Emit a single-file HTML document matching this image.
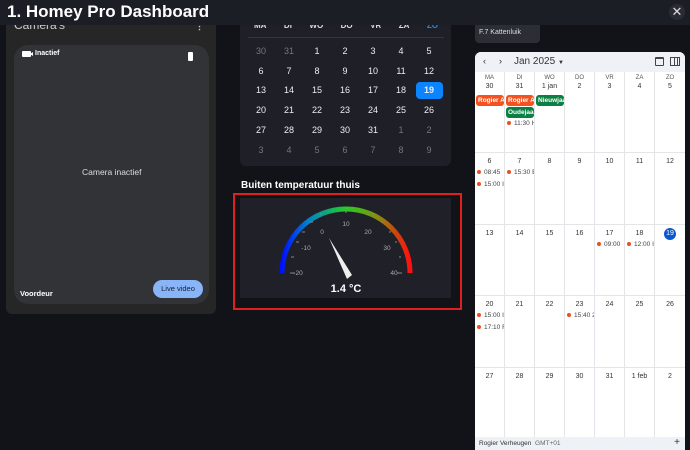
<!DOCTYPE html><html><head><meta charset="utf-8"><style>
*{margin:0;padding:0;box-sizing:border-box}
body{width:690px;height:450px;overflow:hidden;background:#121318;font-family:"Liberation Sans",sans-serif;position:relative;color:#fff}
.a{position:absolute}
.hdr{left:0;top:0;width:690px;height:25px;background:#1c1e25;}
.dp td{width:28px;height:19.8px;text-align:center;font-size:9px;color:#eee}
.g{color:#777 !important}
.gc .wk{display:flex;height:71.5px;border-top:1px solid #e3e5e8}
.gc .c{width:30px;border-right:1px solid #e3e5e8;font-size:7px;color:#333;text-align:center;padding-top:5px;position:relative}
.gc .c:last-child{border-right:none}
.ev{position:absolute;left:2px;font-size:6.5px;color:#444;white-space:nowrap;overflow:hidden;width:27px;text-align:left}
.ev:before{content:"";display:inline-block;width:4px;height:4px;border-radius:2px;background:#e8501e;margin-right:3px;vertical-align:middle}
.tag{position:absolute;left:1px;width:28px;height:11px;border-radius:3px;font-size:6.5px;font-weight:bold;color:#fff;padding:2px 2px;overflow:hidden;white-space:nowrap;text-align:left}
</style></head><body>

<!-- camera -->
<div class="a" style="left:6px;top:25px;width:210px;height:289px;background:#262626;border-radius:0 0 6px 6px"></div>
<div class="a" style="left:14px;top:18px;font-size:12px;color:#ccc">Camera's</div>
<div class="a" style="left:195px;top:21px;font-size:9px;color:#ccc;font-weight:bold">⋮</div>
<div class="a" style="left:14px;top:45px;width:195px;height:259px;background:#323336;border-radius:14px"></div>
<div class="a" style="left:22px;top:51px;width:9px;height:6px;background:#fff;border-radius:1px"></div>
<div class="a" style="left:30px;top:52px;width:0;height:0;border-top:2px solid transparent;border-bottom:2px solid transparent;border-right:3px solid #fff"></div>
<div class="a" style="left:35px;top:50px;font-size:7px;font-weight:bold">Inactief</div>
<div class="a" style="left:188px;top:52px;width:5px;height:9px;background:#fff;border-radius:1px"></div>
<div class="a" style="left:82px;top:167px;font-size:8.5px;color:#ddd">Camera inactief</div>
<div class="a" style="left:20px;top:289px;font-size:7.5px;font-weight:bold">Voordeur</div>
<div class="a" style="left:153px;top:280px;width:50px;height:18px;border-radius:9px;background:#8ab4f8;color:#123;font-size:7.5px;text-align:center;line-height:18px">Live video</div>

<!-- date picker -->
<div class="a" style="left:240px;top:0;width:211px;height:166px;background:#1e1f27;border-radius:0 0 6px 6px"></div>
<div class="a" style="left:248px;top:21px;width:196px;font-size:8px;font-weight:bold;color:#ddd;display:flex;justify-content:space-between;padding:0 6px"><span>MA</span><span>DI</span><span>WO</span><span>DO</span><span>VR</span><span>ZA</span><span style="color:#1e88e5">ZO</span></div>
<div class="a hdr" style="height:25px"></div>
<div class="a" style="left:7px;top:2px;font-size:17px;font-weight:bold;color:#fff;z-index:2">1. Homey Pro Dashboard</div>
<div class="a" style="left:669px;top:4px;width:16px;height:16px;border-radius:8px;background:#2a2c33;color:#ddd;font-size:13px;text-align:center;line-height:16px;z-index:2">✕</div>
<div class="a" style="left:248px;top:37px;width:196px;height:1px;background:#333540"></div>
<div class="a" style="left:416px;top:82px;width:27px;height:17px;border-radius:4px;background:#0b84ff"></div>
<table class="a dp" style="left:247px;top:41px;border-collapse:collapse">
<tr><td class="g">30</td><td class="g">31</td><td>1</td><td>2</td><td>3</td><td>4</td><td>5</td></tr>
<tr><td>6</td><td>7</td><td>8</td><td>9</td><td>10</td><td>11</td><td>12</td></tr>
<tr><td>13</td><td>14</td><td>15</td><td>16</td><td>17</td><td>18</td><td style="font-weight:bold">19</td></tr>
<tr><td>20</td><td>21</td><td>22</td><td>23</td><td>24</td><td>25</td><td>26</td></tr>
<tr><td>27</td><td>28</td><td>29</td><td>30</td><td>31</td><td class="g">1</td><td class="g">2</td></tr>
<tr><td class="g">3</td><td class="g">4</td><td class="g">5</td><td class="g">6</td><td class="g">7</td><td class="g">8</td><td class="g">9</td></tr>
</table>

<!-- gauge -->
<div class="a" style="left:241px;top:180px;font-size:10px;font-weight:bold">Buiten temperatuur thuis</div>
<div class="a" style="left:233px;top:193px;width:229px;height:117px;border:2px solid #e0201e"></div>
<div class="a" style="left:240px;top:198px;width:211px;height:100px;background:#1f2028"></div>
<svg class="a" style="left:240px;top:198px" width="211" height="100" viewBox="240 198 211 100">
<defs><linearGradient id="gr" x1="282" y1="0" x2="410" y2="0" gradientUnits="userSpaceOnUse">
<stop offset="0" stop-color="#0010ff"/><stop offset="0.2" stop-color="#0080d0"/><stop offset="0.5" stop-color="#20d020"/><stop offset="0.75" stop-color="#8a8a10"/><stop offset="1" stop-color="#ff1010"/></linearGradient></defs>
<path d="M282 273 A64 64 0 0 1 410 273" fill="none" stroke="url(#gr)" stroke-width="5"/>
<g stroke="#888" stroke-width="1">
<path d="M290 273h5M291 257h3M296 242h3M302 232h3M310 222h3M320 214h2M333 209h1M346 208v5M359 209h1M372 214h2M381 222h2M389 232h2M395 242h2M399 257h2M397 273h5"/>
</g>
<g fill="#aaa" font-size="6.5" font-family="Liberation Sans" text-anchor="middle">
<text x="298" y="275">-20</text><text x="306" y="250">-10</text><text x="322" y="234">0</text><text x="346" y="226">10</text><text x="368" y="234">20</text><text x="387" y="250">30</text><text x="394" y="275">40</text></g>
<path d="M329 238 L352 275 L347 279 Z" fill="#eee"/>
<text x="346" y="292" fill="#fff" font-size="11" font-weight="bold" text-anchor="middle" font-family="Liberation Sans">1.4 °C</text>
</svg>

<!-- right -->
<div class="a" style="left:475px;top:25px;width:65px;height:18px;background:#2c2e36;border-radius:0 0 4px 4px;font-size:7px;color:#ddd;padding:4px 4px">F.7 Kattenluik</div>
<div class="a" style="left:475px;top:52px;width:210px;height:398px;background:#fff;border-radius:6px 6px 0 0;overflow:hidden">
 <div style="height:20px;background:#eef1f6;position:relative;font-size:10px;color:#333">
  <span class="a" style="left:8px;top:4px;font-size:9px">‹</span><span class="a" style="left:24px;top:4px;font-size:9px">›</span>
  <span class="a" style="left:39px;top:4px">Jan 2025 <span style="font-size:6px">▼</span></span>
  <span class="a" style="left:180px;top:5px;width:9px;height:9px;border:1.3px solid #444;border-top-width:2.5px;border-radius:1px"></span>
  <span class="a" style="left:195px;top:5px;width:10px;height:9px;border:1.3px solid #444;background:linear-gradient(90deg,transparent 3px,#444 3px,#444 4px,transparent 4px,transparent 6px,#444 6px,#444 7px,transparent 7px)"></span>
 </div>
 <div class="gc">
 <div class="wk" style="border-top:none;height:80px;position:relative">
  <div class="c" style="padding-top:3px;font-size:6px;color:#555">MA<br><span style="font-size:7px;color:#333;line-height:11px">30</span><div class="tag" style="top:23px;background:#f4511e">Rogier Al</div></div>
  <div class="c" style="padding-top:3px;font-size:6px;color:#555">DI<br><span style="font-size:7px;color:#333;line-height:11px">31</span><div class="tag" style="top:23px;background:#f4511e">Rogier Al</div><div class="tag" style="top:35px;background:#0b8043">Oudejaar</div><div class="ev" style="top:48px">11:30 H</div></div>
  <div class="c" style="padding-top:3px;font-size:6px;color:#555">WO<br><span style="font-size:7px;color:#333;line-height:11px">1 jan</span><div class="tag" style="top:23px;background:#0b8043">Nieuwjaa</div></div>
  <div class="c" style="padding-top:3px;font-size:6px;color:#555">DO<br><span style="font-size:7px;color:#333;line-height:11px">2</span></div>
  <div class="c" style="padding-top:3px;font-size:6px;color:#555">VR<br><span style="font-size:7px;color:#333;line-height:11px">3</span></div>
  <div class="c" style="padding-top:3px;font-size:6px;color:#555">ZA<br><span style="font-size:7px;color:#333;line-height:11px">4</span></div>
  <div class="c" style="padding-top:3px;font-size:6px;color:#555">ZO<br><span style="font-size:7px;color:#333;line-height:11px">5</span></div>
 </div>
 <div class="wk"><div class="c">6<div class="ev" style="top:16px">08:45</div><div class="ev" style="top:28px">15:00 I</div></div><div class="c">7<div class="ev" style="top:16px">15:30 E</div></div><div class="c">8</div><div class="c">9</div><div class="c">10</div><div class="c">11</div><div class="c">12</div></div>
 <div class="wk"><div class="c">13</div><div class="c">14</div><div class="c">15</div><div class="c">16</div><div class="c">17<div class="ev" style="top:16px">09:00</div></div><div class="c">18<div class="ev" style="top:16px">12:00 I</div></div><div class="c"><span style="display:inline-block;width:12px;height:12px;border-radius:6px;background:#0b57d0;color:#fff;line-height:12px;margin-top:-2px">19</span></div></div>
 <div class="wk"><div class="c">20<div class="ev" style="top:16px">15:00 I</div><div class="ev" style="top:28px">17:10 R</div></div><div class="c">21</div><div class="c">22</div><div class="c">23<div class="ev" style="top:16px">15:40 2</div></div><div class="c">24</div><div class="c">25</div><div class="c">26</div></div>
 <div class="wk"><div class="c">27</div><div class="c">28</div><div class="c">29</div><div class="c">30</div><div class="c">31</div><div class="c">1 feb</div><div class="c">2</div></div>
 </div>
 <div class="a" style="left:0;top:385px;width:210px;height:13px;background:#eef1f6;font-size:6.5px;color:#333;padding:3px 4px">Rogier Verheugen &nbsp;<span style="color:#666">GMT+01</span><span class="a" style="right:5px;top:0;font-size:10px">+</span></div>
</div>
</body></html>
